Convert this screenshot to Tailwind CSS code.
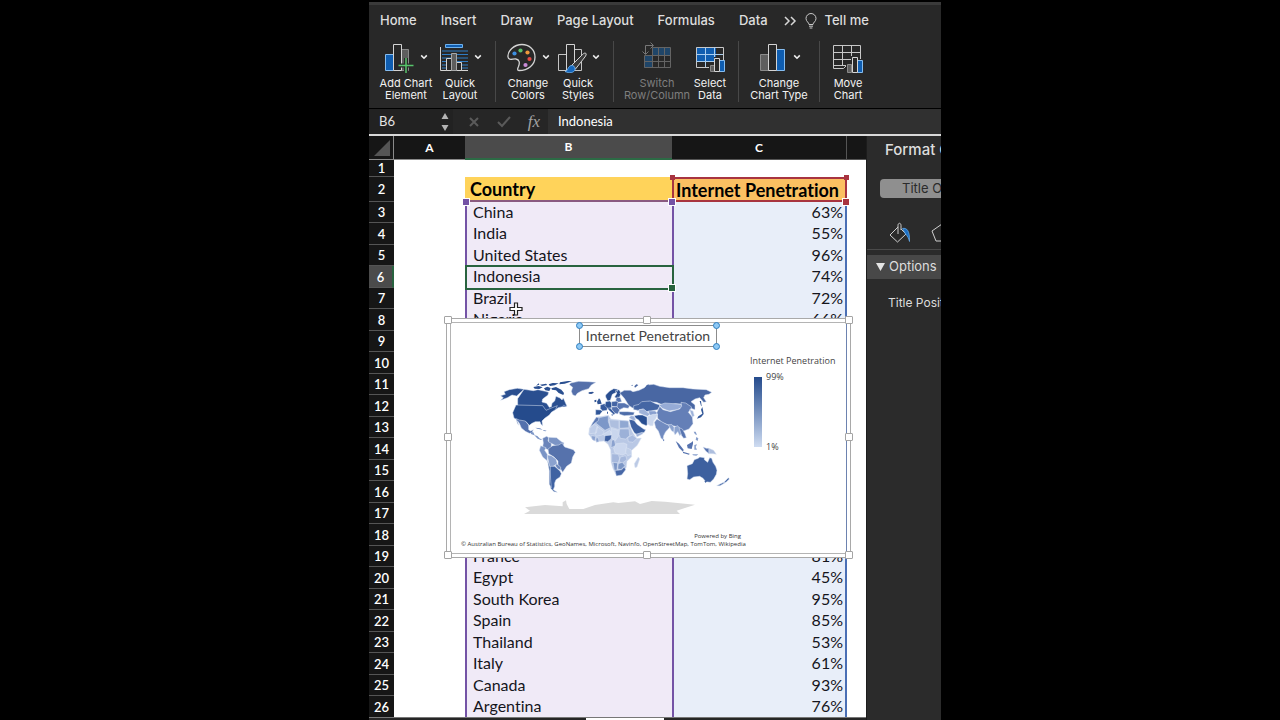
<!DOCTYPE html>
<html lang="en">
<head>
  <meta charset="UTF-8" />
  <meta name="viewport" content="width=device-width, initial-scale=1.0"/>
  <title>Internet Penetration</title>
  <script src="https://cdn.jsdelivr.net/npm/@tailwindcss/browser@4"></script>
</head>
<body class="bg-black">

  <div class="grid grid-cols-[369fr_572fr_339fr] h-screen overflow-hidden">
    <main class="col-start-2 min-w-0 h-screen pt-[2px] flex flex-col overflow-hidden font-['Inter',sans-serif] text-white [font-variant-ligatures:none]">

      <!-- Tabs -->
      <nav class="shrink-0 h-[34px] bg-[#282828] border-t-[3px] border-[#3a3a3a] pl-[11px] flex items-center gap-6 text-[13px] font-medium text-[#dedede] whitespace-nowrap">
        <a href="#">Home</a>
        <a href="#">Insert</a>
        <a href="#">Draw</a>
        <a href="#">Page Layout</a>
        <a href="#">Formulas</a>
        <a href="#">Data</a>
        <div class="flex items-center gap-2 -ml-2">
          <button aria-label="More tabs">
            <svg class="w-[13px] h-[10px]" viewBox="0 0 13 10" fill="none" stroke="#d8d8d8" stroke-width="1.5"><path d="M1 1l4 4-4 4M7 1l4 4-4 4"/></svg>
          </button>
          <svg class="w-3 h-4" viewBox="0 0 12 16" fill="none" stroke="#c8c8c8"><path d="M4 11.5c0-2-3-3-3-6a5 5 0 0 1 10 0c0 3-3 4-3 6zM4 13.2h4M4.6 15h2.8"/></svg>
          <a href="#">Tell me</a>
        </div>
      </nav>

      <!-- Ribbon -->
      <div class="shrink-0 h-[72px] bg-[#282828] pl-[10px] pt-[5px] flex items-start text-[11px] leading-3 text-[#f2f2f2] whitespace-nowrap">
        <button class="w-[54px] flex flex-col items-center gap-1">
          <span class="flex items-center gap-1">
            <svg class="w-8 h-8" viewBox="0 0 32 32" fill="none">
              <path d="M1.500 13.500h8v16h-8z" fill="#0f5db0" stroke="#86bdf0"/>
              <path d="M17.500 8.500h7v21h-7z" fill="#5e5e5e" stroke="#8a8a8a"/>
              <path d="M9.500 3.500h8v26h-8z" fill="#282828" stroke="#d4d4d4"/>
              <path d="M22 17v15M14.500 24.500h15" stroke="#282828" stroke-width="4"/>
              <path d="M22 17v15M14.500 24.500h15" stroke="#57c46b" stroke-width="1.500"/>
            </svg>
            <svg class="w-2 h-2" viewBox="0 0 8 8" fill="none" stroke="#eee" stroke-width="1.6"><path d="M1.200 2.400L4 5.200l2.800-2.800"/></svg>
          </span>
          <span>Add Chart<br>Element</span>
        </button>
        <button class="w-[46px] ml-1 flex flex-col items-center gap-1">
          <span class="flex items-center gap-1">
            <svg class="w-8 h-8" viewBox="0 0 32 32" fill="none">
              <path d="M7.500 3.500h17v3h-17z" fill="#0f5db0" stroke="#6fb2ee"/>
              <path d="M4 10h26M4 13.500h26M4 17h26M4 20.500h26M4 24h26M4 27h26" stroke="#2f7cc4" stroke-width="1.200"/>
              <path d="M2.500 6v23.500H30" stroke="#d4d4d4"/>
              <path d="M8.500 17.500h5v12h-5zM18.500 21.500h5v8h-5z" fill="#282828" stroke="#d4d4d4"/>
              <path d="M13.500 12.500h5v17h-5z" fill="#5e5e5e" stroke="#a8a8a8"/>
            </svg>
            <svg class="w-2 h-2" viewBox="0 0 8 8" fill="none" stroke="#eee" stroke-width="1.6"><path d="M1.200 2.400L4 5.200l2.800-2.800"/></svg>
          </span>
          <span>Quick<br>Layout</span>
        </button>
        <div class="w-px h-[61px] mx-3 bg-[#484848]"></div>
        <button class="w-10 flex flex-col items-center gap-1">
          <span class="flex items-center gap-1">
            <svg class="w-8 h-8" viewBox="0 0 32 32" fill="none">
              <path d="M13 29.500c-2 0-1.500-2-.5-4 1.500-3.500 1-7-2.500-7.500-3-.5-7.500 2-8-2C1.300 10 8 3.500 16 3.500c7 0 13 5 13 12.500 0 8-7 13.500-16 13.500z" stroke="#d4d4d4" stroke-width="1.300"/>
              <circle cx="8.500" cy="12.500" r="2.100" fill="#3d8fe0"/><circle cx="14.500" cy="9.500" r="2.100" fill="#5cc26c"/><circle cx="21.500" cy="11.500" r="2.100" fill="#ee9a3c"/><circle cx="23.500" cy="18" r="2.100" fill="#e24a45"/><circle cx="19.500" cy="24" r="2.100" fill="#c98bd6"/>
            </svg>
            <svg class="w-2 h-2" viewBox="0 0 8 8" fill="none" stroke="#eee" stroke-width="1.6"><path d="M1.200 2.400L4 5.200l2.800-2.800"/></svg>
          </span>
          <span>Change<br>Colors</span>
        </button>
        <button class="w-[42px] ml-[9px] flex flex-col items-center gap-1">
          <span class="flex items-center gap-1">
            <svg class="w-8 h-8" viewBox="0 0 32 32" fill="none">
              <path d="M2.500 13.500h8v16h-8zM18.500 8.500h7v21h-7z" stroke="#c4c4c4"/>
              <path d="M10.500 3.500h8v26h-8z" fill="#282828" stroke="#d4d4d4"/>
              <path d="M29.800 12.300c1 .8 0 2.400-.8 3.600L19.500 28l-4-3.500L26.500 13.500c1.200-1.200 2.400-1.800 3.300-1.200z" fill="#3c3c3c" stroke="#d4d4d4"/>
              <path d="M9 30.500c3 0 2.500-5 6-6 2.500-.5 4.500 1.500 4 4-.8 3.500-6 4-10 2z" fill="#1467bd" stroke="#77b7f2" stroke-width=".8"/>
            </svg>
            <svg class="w-2 h-2" viewBox="0 0 8 8" fill="none" stroke="#eee" stroke-width="1.6"><path d="M1.200 2.400L4 5.200l2.800-2.800"/></svg>
          </span>
          <span>Quick<br>Styles</span>
        </button>
        <div class="w-px h-[61px] ml-[14px] mr-3 bg-[#484848]"></div>
        <button class="w-[62px] flex flex-col items-center gap-1 text-[#7e7e7e]" disabled>
          <svg class="w-8 h-8" viewBox="0 0 32 32" fill="none">
            <path d="M3 15h8V7h19v7H11v13H3z" fill="#1f4568"/>
            <path d="M3.500 14.500h26v12h-26zM11.500 6.500h18v8M11.500 6.500v20M17.500 6.500v20M23.500 6.500v20M3.500 20.500h26M29.500 14v12" stroke="#646464"/>
            <path d="M4.500 13V4.500H12M1.500 10.500l3 3 3-3M9.500 1.500l3 3-3 3" stroke="#777"/>
          </svg>
          <span>Switch<br>Row/Column</span>
        </button>
        <button class="w-8 ml-[6px] flex flex-col items-center gap-1">
          <svg class="w-8 h-8" viewBox="0 0 32 32" fill="none">
            <path d="M2 6h20v14H2z" fill="#0f5db0"/>
            <path d="M2.500 6.500h27v20h-27z" stroke="#c8c8c8"/>
            <path d="M2 13.500h27M2 20.500h27M11.500 6v20M20.500 6v20" stroke="#a9cdee"/>
            <path d="M15 31V23h5V16h6v3h6v12z" fill="#282828"/>
            <path d="M16.500 24.500h4v6h-4z" fill="#5e5e5e" stroke="#8a8a8a"/><path d="M25.500 19.500h5v11h-5z" fill="#0f5db0" stroke="#86bdf0"/><path d="M20.500 17.500h5v13h-5z" fill="#282828" stroke="#d4d4d4"/>
          </svg>
          <span>Select<br>Data</span>
        </button>
        <div class="w-px h-[61px] mx-3 bg-[#484848]"></div>
        <button class="w-[56px] flex flex-col items-center gap-1">
          <span class="flex items-center gap-1">
            <svg class="w-8 h-8" viewBox="0 0 32 32" fill="none">
              <path d="M3.500 13.500h8v16h-8z" fill="#5e5e5e" stroke="#8a8a8a"/>
              <path d="M19.500 8.500h8v21h-8z" fill="#0f5db0" stroke="#86bdf0"/>
              <path d="M11.500 3.500h8v26h-8z" fill="#282828" stroke="#d4d4d4"/>
            </svg>
            <svg class="w-2 h-2" viewBox="0 0 8 8" fill="none" stroke="#eee" stroke-width="1.6"><path d="M1.200 2.400L4 5.200l2.800-2.800"/></svg>
          </span>
          <span>Change<br>Chart Type</span>
        </button>
        <div class="w-px h-[61px] mx-3 bg-[#484848]"></div>
        <button class="w-8 flex flex-col items-center gap-1">
          <svg class="w-8 h-8" viewBox="0 0 32 32" fill="none">
            <path d="M1.500 4.500h27v20h-14l-3 3h-10zM1.500 11.500h27M1.500 18.500h27M10.500 4.500v20M19.500 4.500v20M1.500 24.500h13" stroke="#c8c8c8"/>
            <path d="M14 32V23h5V15h7v3h6v14z" fill="#282828"/>
            <path d="M15.500 23.500h4v8h-4z" fill="#5e5e5e" stroke="#8a8a8a"/><path d="M25.500 19.500h5v12h-5z" fill="#0f5db0" stroke="#86bdf0"/><path d="M20.500 16.500h5v15h-5z" fill="#282828" stroke="#d4d4d4"/>
          </svg>
          <span>Move<br>Chart</span>
        </button>
      </div>

      <!-- Formula bar -->
      <div class="shrink-0 h-7 bg-[#262626] border-t border-t-black border-b-2 border-b-[#d9d9d9] flex font-['Lato',sans-serif] text-[13px]">
        <input type="text" aria-label="Name box" value="B6" class="w-[68px] pl-[10px] bg-[#222222] text-[#e4e4e4]" />
        <button aria-label="Step cell" class="w-[16px] bg-[#222222] flex items-center justify-center">
          <svg class="w-2 h-[18px]" viewBox="0 0 8 18" fill="#b4b4b4"><path d="M4 0l3.500 6h-7zM4 18l3.500-6h-7z"/></svg>
        </button>
        <div class="w-[95px] pl-[15px] pr-2 flex items-center justify-between text-[#a2a2a2]">
          <button aria-label="Cancel"><svg class="w-3 h-3" viewBox="0 0 12 12" stroke="#5a5a5a" stroke-width="2"><path d="M2 2l8 8M10 2l-8 8"/></svg></button>
          <button aria-label="Enter"><svg class="w-[14px] h-3" viewBox="0 0 14 12" fill="none" stroke="#5a5a5a" stroke-width="2"><path d="M1 6l4 4 8-9"/></svg></button>
          <button aria-label="Insert function" class="font-['Liberation_Serif',serif] italic text-[17px] leading-5">fx</button>
        </div>
        <input type="text" aria-label="Formula" value="Indonesia" class="flex-1 min-w-0 pl-[10px] bg-[#303030]" />
      </div>

      <div class="flex-1 min-h-0 flex">

        <!-- Sheet -->
        <section class="relative flex-1 min-w-0 bg-white overflow-hidden flex flex-col">
          <div class="flex-1 min-h-0 overflow-hidden">
            <table class="w-full table-fixed border-separate border-spacing-0 font-['Lato',sans-serif] text-[16px] leading-[18px] text-[#15151c]">
              <colgroup>
                <col class="w-[25px]"><col class="w-[71px]"><col class="w-[207px]"><col class="w-[175px]"><col>
              </colgroup>
              <thead class="text-[12px] text-white">
                <tr class="h-6 bg-[#161616]">
                  <th class="p-0 border-r border-b border-[#8a8a8a]"><svg class="w-[18px] h-[18px] ml-1" viewBox="0 0 18 18" fill="#555"><path d="M17 1v16H1z"/></svg></th>
                  <th class="p-0 border-b border-[#8a8a8a]">A</th>
                  <th class="p-0 bg-[#4b4b4b] border-b-2 border-[#2c6b45]">B</th>
                  <th class="p-0 border-b border-r border-[#555]">C</th>
                  <th class="p-0 border-b border-[#555]"></th>
                </tr>
              </thead>
              <tbody id="rows">
                <tr class="h-[17px]">
                  <th class="p-0 bg-[#161616] border-b border-[#555] text-[13px] leading-4 font-semibold text-white">1</th>
                  <td class="p-0"></td><td class="p-0"></td><td class="p-0"></td><td class="p-0"></td>
                </tr>
                <tr class="h-[25px]">
                  <th class="p-0 bg-[#161616] border-b border-[#555] text-[13px] leading-4 font-semibold text-white">2</th>
                  <td class="p-0"></td>
                  <td class="p-0 pl-[5px] bg-[#ffd35a] border-b-2 border-[#8a5a80] text-[18px] font-bold text-black">Country</td>
                  <td class="relative p-0 pl-[2px] bg-[#fbc062] border-2 border-[#a83440] text-[18px] font-bold text-black whitespace-nowrap">Internet Penetration
                    <span class="absolute -top-1 -left-1 size-[5px] bg-[#a83440]"></span>
                    <span class="absolute -top-1 -right-1 size-[5px] bg-[#a83440]"></span>
                  </td>
                  <td class="p-0"></td>
                </tr>
              </tbody>
            </table>
          </div>

          <!-- Sheet tabs, cut off at the bottom edge -->
          <div class="shrink-0 h-[3px] flex bg-[#262626] border-t border-[#777]">
            <div class="w-[217px]"></div>
            <div class="w-[78px] bg-white"></div>
          </div>

          <!-- Range handles -->
          <span class="absolute left-[94px] top-[63px] size-[6px] bg-[#7453a6] outline outline-white"></span>
          <span class="absolute left-[300px] top-[63px] size-[6px] bg-[#7453a6] outline outline-white"></span>
          <span class="absolute left-[474px] top-[63px] size-[6px] bg-[#a83440] outline outline-white"></span>

          <!-- Mouse pointer -->
          <svg class="absolute left-[140px] top-[166px] w-[14px] h-[14px]" viewBox="0 0 14 14"><path d="M5.500 1h3v4.500H13v3H8.500V13h-3V8.500H1v-3h4.500z" fill="#fff" stroke="#222" stroke-width="1.200"/></svg>

          <!-- Chart -->
          <figure class="absolute left-[77px] top-[182px] w-[405px] h-[240px] p-[3px] bg-white border border-[#a9a9a9] text-[#444444] font-['Open_Sans',sans-serif]">
            <div class="h-full border border-[#b4b4b4] border-r-[#6d83b0] flex flex-col">
              <figcaption class="relative ml-[128px] mt-[2px] h-[22px] w-[138px] border border-[#8c8c8c] text-center font-['Lato',sans-serif] text-[14px] leading-5 whitespace-nowrap">Internet Penetration
                <span class="absolute -top-1 -left-1 size-[7px] rounded-full bg-[#8ec9f5] border border-[#2f7fc0]"></span>
                <span class="absolute -top-1 -right-1 size-[7px] rounded-full bg-[#8ec9f5] border border-[#2f7fc0]"></span>
                <span class="absolute -bottom-1 -left-1 size-[7px] rounded-full bg-[#8ec9f5] border border-[#2f7fc0]"></span>
                <span class="absolute -bottom-1 -right-1 size-[7px] rounded-full bg-[#8ec9f5] border border-[#2f7fc0]"></span>
              </figcaption>
              <div class="flex-1 flex">
                <div class="w-[290px] pl-[10px] flex flex-col text-[6px] leading-2 whitespace-nowrap text-[#333333]">
                  <svg class="mt-[22px] ml-[19px] w-[265px] h-[150px]" viewBox="0 0 795 450" stroke="#dfe7f5" stroke-width="1.500" stroke-linejoin="round">
                    <!-- Antarctica -->
                    <path d="M132 435L150 425 135 415 195 408 248 412 248 400 258 394 260 405 268 420 310 420 345 408 400 400 415 402 465 397 480 405 515 396 555 398 645 407 590 425 600 435z" fill="#dadada" stroke="none"/>
                    <!-- North America -->
                    <path d="M62 80l14-4-4-8 16-6 24-4 20 3-22 20-14-3-14 8-20 8 8-8z" fill="#2a4f90"/>
                    <path d="M132 61l28 4 14-3 22 5 10 3-2 8-16 12-2 9 14 4 8 12 6-2 2-10 8-7 4-14 12 5 6 6 4-6 8 18 3 7-14 1-12 3-10 7-12 2-12 8-8-11-14-3-66-2 0-28z" fill="#2a4f90"/>
                    <path d="M160 54l16-3 12 4-10 5-14-1zM180 47l18-3 4 4-16 3zM192 58l10-5 10 4-4 9-12-2zM206 46l12-4 18 1-12 6-14 2zM240 40l24-4 12 1-22 7-16 2zM214 58l14-4 16 8 8 10-2 6-14-6-8-8-12-2zM168 50l10-3-2-4z" fill="#2a4f90" stroke="none"/>
                    <path d="M108 108l80 2 10 14 14-6 20-8-6 12-12 8-6 8-14 10-8 8 2 14-5-4-3-8-14 0-10 5-8 6-10-11-20-2-16-9-4-16z" fill="#254b8c"/>
                    <path d="M108 149l10 4 18 3 10 12 0 14 6 4 8-4-4 9-8 2-12-6-12-10-6-14-6-8 4 14-4-6z" fill="#5471ad"/>
                    <path d="M152 189l8 1 4 9 8 2 8 8 6 1-3 3-10-4-10-10-10-4z" fill="#7e97c7" stroke="none"/>
                    <path d="M166 176l14 2 8 4-16-3zM190 183l10 2-4 2-6-2zM248 107l8 1 1 5-8 0z" fill="#6b86bb" stroke="none"/>
                    <path d="M272 42l24-5 30 1 22 2-14 8-8 11-20 6-14 8-6 8-8-4-4-10 4-12-10-8z" fill="#5570aa"/>
                    <path d="M326 70l12-2 4 3-8 4-8-1z" fill="#2f5293" stroke="none"/>
                    <!-- South America -->
                    <path d="M188 208l12-6 6 4-2 10 10 4 0 18-10 4-16-8 2-12z" fill="#6a84ba"/>
                    <path d="M206 205l24 1 8 7 8 6 6 2-2 8-18 4-14-8-12-6z" fill="#7b94c5"/>
                    <path d="M182 230l16 6-4 8 8 12 0 20-14-12-10-20z" fill="#7a94c6"/>
                    <path d="M204 240l14-10 18-2 10-6 8 12 26 8 6 8-8 14-4 18-14 10-12 18-6-10-8-12 0-12-12-12-16-10z" fill="#5672ac"/>
                    <path d="M202 258l12 2 14 10 4 14-6 4-10 6-8-2z" fill="#8ba2cf"/>
                    <path d="M230 284l12 10 0 10-10-6-6-8z" fill="#6d87bc"/>
                    <path d="M210 292l14 0 16 14 4 8-4 10-12 8-4 10 0 10-4 10 12 8-10-2-10-10-2-22z" fill="#3f62a2"/>
                    <path d="M202 272l8 22 2 40 2 22-6-10 0-40z" fill="#2f5597"/>
                    <g transform="translate(315 0)">
                      <!-- Europe -->
                      <path d="M62 78l12-12 12-7 12 2-2 8-14 7-6 18-8 2-6-12zM90 66l12-4 6 10-4 12-10 4-5-4 7-12z" fill="#294e90"/>
                      <path d="M36 98l6-10 4 4 4 12-12 2zM28 94l6-2 0 6-5 2z" fill="#2f5494" stroke="none"/>
                      <path d="M32 122l16 1 4 4-8 10-12 1z" fill="#2f5597"/>
                      <path d="M46 108l12-4 10 6-2 14-14 2-6-8z" fill="#365a9c"/>
                      <path d="M62 98l12-2 6 6 0 14-12 2-8-8z" fill="#2f5597"/>
                      <path d="M80 98l16-2 6 8-4 10-18-2z" fill="#4464a4"/>
                      <path d="M68 118l8 0 14 14-3 5-16-15zM86 136l-8 1 4 3zM66 128l3 0 0 6-3 0z" fill="#3a5e9f" stroke="none"/>
                      <path d="M80 114l16-1 8 10-6 12-8-2-10-12z" fill="#5471ad"/>
                      <path d="M98 102l20 0 16 8-4 8-14-2-12 6-8-8zM96 84l10 2 4 12-10 2-8-6z" fill="#5774b0"/>
                      <path d="M102 128l26 0 20 2-2 8-28 2-14-4z" fill="#4d6da9"/>
                      <!-- Asia -->
                      <path d="M104 72l14-8 18 0 8 4 18-4 16-8 8-8 20-2 18 6 30 4 40 0 30 4 40 2 16 8-8 6-12 2-4 8 8 12-8 2-12-14-14 4-12 8 12 10 0 14-12-4-12-12-14 0-20-2-16 2-22 2-20-8-24-2-10 8-20 4 0 16-18-10-10-6-14-22z" fill="#4967a3"/>
                      <path d="M148 52l6-6 6 2-10 8zM182 52l8-6 2 4zM138 50l4-3 2 3z" fill="#4967a3" stroke="none"/>
                      <path d="M146 110l16-4 8-8 26-2 16 8 14 4-8 14-20 4-14 2-10-8-14 4-14-2z" fill="#4566a4"/>
                      <path d="M162 122l14-2 12 10 8 4-8 8-12-4-14-6z" fill="#9fb3d9"/>
                      <path d="M190 126l20 0 8 6-14 10-10-4z" fill="#89a0cf"/>
                      <path d="M222 108l18-6 24 2 24 2 6 8-18 8-24 4-20-8z" fill="#96abd6"/>
                      <path d="M216 130l8-18 10 10 22 6 28-8 6-8-2-12 14 2 18 12-4 8-6 8 12 14 2 20-12 16-16 6-14-2-10-12-22-4-20-8-12-12z" fill="#647fb7"/>
                      <path d="M314 122l10 4 4 14-6 4-4-10z" fill="#9db2d9"/>
                      <path d="M352 114l-4 8 4 12-12 8-4 7 12-4 8-10-2-12zM344 96l4 14 2 2-2-16z" fill="#335899" stroke="none"/>
                      <path d="M148 140l12-2 12 0 14 6 2 20-4 6-14-6-10-12-8-4z" fill="#284e91"/>
                      <path d="M188 142l16-6 14 0-6 14-6 6-2 14-8 0-10-6z" fill="#cbd7ed"/>
                      <path d="M208 160l8-10 14 8 14 8 14 4-8 10-8 8-6 12-2 12-6-4-8-22-8-10z" fill="#718bc0"/>
                      <path d="M234 210l4 2-1 5-3-2z" fill="#718bc0" stroke="none"/>
                      <path d="M250 168l10-2 8 10 0 14-8-4zM268 174l10-4 8 10 4 14-6 6-6-12-8 10-4-10z" fill="#8aa2cf"/>
                      <path d="M282 176l10 4 8 14 4 12-8 2-6-8z" fill="#5875b0"/>
                      <path d="M132 152l14 0 10 14 20 14 6 2-4 8-20 8-10-6-10-18z" fill="#3d60a1"/>
                      <path d="M152 196l20-6 2 4-18 10zM138 140l10 2 4 12-8 0-12-8z" fill="#9db1d8"/>
                      <!-- Africa -->
                      <path d="M36 144l34-5 8 11 26 3 26 3 5 16 8 18 12 18 14-1-12 22-18 16 1 18-14 14-2 18-12 20-18 4-10-20-6-20-1-36-8-17-12-10-20 2-14-6-12-16 2-18 12-20z" fill="#b9c8e5"/>
                      <path d="M42 146l28-6 0 18 6 18-16 8-28-22z" fill="#7c97c8"/>
                      <path d="M34 144l8 3-2 8-14 10-10 12 6-14z" fill="#5b78b3"/>
                      <path d="M14 178l14-12 10 6-4 20-20 2zM36 172l22 16-6 10-18 4-4-6z" fill="#bfcde8"/>
                      <path d="M72 152l30 2 0 28-26-8z" fill="#aebfdf"/>
                      <path d="M104 154l26 2 2 20-28 2z" fill="#90a8d2"/>
                      <path d="M104 180l28 0 2 20-12 10-16-2-4-12z" fill="#9cb1d8"/>
                      <path d="M78 178l22 6 0 18-10 14-10-8-2-14zM54 196l20-12 6 8-4 8-18 0z" fill="#c9d6ed"/>
                      <path d="M60 200l20-2-2 12-10 8-10-2z" fill="#3f60a0"/>
                      <path d="M32 208l8-2 2 12-8 2zM18 200l14 2-2 14-8-4z" fill="#8ba2cf"/>
                      <path d="M80 214l8-2 4 18-14 6z" fill="#8ba2cf"/>
                      <path d="M94 224l22-2 10 4-4 28-10 4-22-6-4-14z" fill="#cbd7ee"/>
                      <path d="M128 206l14-8 14 10-12 12-14-2z" fill="#a9bbdf"/>
                      <path d="M124 236l14 6 2 14-12 4-6-10z" fill="#c2d0e9"/>
                      <path d="M80 254l20 2 4 12-4 14-20-2zM106 264l16-4 4 12-14 10-10-4z" fill="#a6b8dc"/>
                      <path d="M84 280l14 2-2 22-8 0zM100 284l12-4 8 10-12 12-10-2z" fill="#7d97c6"/>
                      <path d="M90 304l8 0 12-2 8-8 4 8-12 16-16 3z" fill="#4868a7"/>
                      <path d="M160 264l4 6-8 24-6 2-2-12z" fill="#bccae5"/>
                      <!-- Islands and Oceania -->
                      <path d="M272 216l10 8 14 18-2 6-12-12zM294 248l20 6-2 3-18-5zM306 228l14-8 4-4 0 8-4 16-12-2z" fill="#5673af" stroke="none"/>
                      <path d="M328 228l8-2-4 8 4 8-8 0zM322 256l18 0-6 4-10-1zM326 188l6 0 4 10-6-2zM334 204l6 4-2 8-6-4z" fill="#879ecb" stroke="none"/>
                      <path d="M354 234l10 4 8 0 0 16-10-8z" fill="#5673af"/><path d="M372 238l14 6 8 12-10-2-12 0z" fill="#adbede"/>
                      <path d="M306 290l16-6 6-12 12-4 4-4 14 2 0 6 10 8 6-14 6 2 4 12 8 12 4 12-2 12-8 14-10 10-14-2-8-10-10-6-18 2-12 8-8-2 2-16z" fill="#3d609f"/>
                      <path d="M358 336l8 0-4 6z" fill="#3d609f" stroke="none"/>
                      <path d="M430 326l3 4-10 10-8 2zM416 340l3 2-14 8-10 0z" fill="#3f62a2"/>
                    </g>
                  </svg>
                  <p class="mt-[13px] text-right">Powered by Bing</p>
                  <p>© Australian Bureau of Statistics, GeoNames, Microsoft, Navinfo, OpenStreetMap, TomTom, Wikipedia</p>
                </div>
                <div class="pl-[9px] pt-2 text-[9px] leading-3 whitespace-nowrap">
                  <p>Internet Penetration</p>
                  <div class="mt-1 ml-1 flex gap-1">
                    <div class="w-2 h-[70px] mt-[6px] bg-linear-to-b from-[#254b8c] to-[#cfdcf1]"></div>
                    <div class="h-[82px] flex flex-col justify-between"><span>99%</span><span>1%</span></div>
                  </div>
                </div>
              </div>
            </div>
            <span class="absolute -left-[3px] -top-[3px] size-2 bg-white border border-[#a4a4a4] rounded-[1px]"></span>
            <span class="absolute left-[196px] -top-[3px] size-2 bg-white border border-[#a4a4a4] rounded-[1px]"></span>
            <span class="absolute -right-[3px] -top-[3px] size-2 bg-white border border-[#a4a4a4] rounded-[1px]"></span>
            <span class="absolute -left-[3px] top-[114px] size-2 bg-white border border-[#a4a4a4] rounded-[1px]"></span>
            <span class="absolute -right-[3px] top-[114px] size-2 bg-white border border-[#a4a4a4] rounded-[1px]"></span>
            <span class="absolute -left-[3px] -bottom-[2px] size-2 bg-white border border-[#a4a4a4] rounded-[1px]"></span>
            <span class="absolute left-[196px] -bottom-[2px] size-2 bg-white border border-[#a4a4a4] rounded-[1px]"></span>
            <span class="absolute -right-[3px] -bottom-[2px] size-2 bg-white border border-[#a4a4a4] rounded-[1px]"></span>
          </figure>
        </section>

        <!-- Format pane -->
        <aside class="w-[75px] shrink-0 bg-[#2b2b2b] border-l border-[#1c1c1c] overflow-hidden whitespace-nowrap text-[#dddddd]">
          <h2 class="pl-[18px] pt-1 text-[15px] leading-5 font-medium">Format Chart Title</h2>
          <button class="block ml-[13px] mt-[19px] w-[140px] h-[19px] pl-[22px] rounded bg-[#8f8f8f] text-left text-[13px] leading-[19px] text-[#2b2b2b]">Title Options</button>
          <div class="mt-6 pl-[22px] pb-[5px] flex gap-5 border-b border-[#4a4a4a]">
            <button aria-label="Fill &amp; Line" class="shrink-0">
              <svg class="w-[22px] h-[22px]" viewBox="0 0 22 22" fill="none" stroke="#cfcfcf"><path d="M9 5L1 13l7.500 7L17 12l-5-5M9 12V3.500c0-3 3-3 3 0V8"/><path d="M13.500 6.500c4-1 7.500 2 7 13-1-3-1.500-5-4-7.500z" fill="#1b6fc4" stroke="#6db1f0" stroke-width=".7"/></svg>
            </button>
            <button aria-label="Effects" class="shrink-0">
              <svg class="w-[22px] h-[22px]" viewBox="0 0 22 22" fill="none" stroke="#cfcfcf"><path d="M11 2l10 7-4 10H5L1 9z"/></svg>
            </button>
          </div>
          <button class="mt-[5px] w-full h-6 pl-[9px] flex items-center gap-1 bg-[#484848] text-[13px]">
            <svg class="w-[9px] h-2" viewBox="0 0 9 8" fill="#e4e4e4"><path d="M0 0h9L4.500 8z"/></svg>Options
          </button>
          <p class="mt-4 pl-[21px] text-[12px] leading-4">Title Position</p>
        </aside>
      </div>
    </main>
  </div>

  <script>
    // Rows 3-26 of the sheet; the ones under the chart stay empty
    const data = [
      ['China', '63%'], ['India', '55%'], ['United States', '96%'], ['Indonesia', '74%'],
      ['Brazil', '72%'], ['Nigeria', '66%'], ['', ''], ['', ''], ['', ''], ['', ''], ['', ''],
      ['', ''], ['', ''], ['', ''], ['', ''], ['', ''], ['France', '81%'], ['Egypt', '45%'],
      ['South Korea', '95%'], ['Spain', '85%'], ['Thailand', '53%'], ['Italy', '61%'],
      ['Canada', '93%'], ['Argentina', '76%']
    ];

    const selection = `<span class="absolute z-10 -left-[2px] -right-[2px] -top-px -bottom-[2px] border-2 border-[#28633f]"></span>
      <span class="absolute -right-[3px] -bottom-[3px] size-[6px] bg-[#28633f] outline outline-white z-10"></span>`;

    document.getElementById('rows').insertAdjacentHTML('beforeend', data.map(([country, value], i) => `
      <tr class="odd:h-[21px] even:h-[22px]">
        <th class="p-0 border-b border-[#555] text-[13px] leading-4 font-semibold text-white ${country === 'Indonesia' ? 'bg-[#4b4b4b] border-r-2 border-r-[#28633f]' : 'bg-[#161616]'}">${i + 3}</th>
        <td class="p-0"></td>
        <td class="relative p-0 pb-[2px] pl-[6px] bg-[#f0eaf7] border-l-2 border-[#7453a6]">${country}${country === 'Indonesia' ? selection : ''}</td>
        <td class="p-0 pb-[2px] pr-[2px] bg-[#e8eef9] border-l-2 border-l-[#7453a6] border-r-2 border-r-[#4a6fb5] text-right">${value}</td>
        <td class="p-0"></td>
      </tr>`).join(''));
  </script>

</body>
</html>
